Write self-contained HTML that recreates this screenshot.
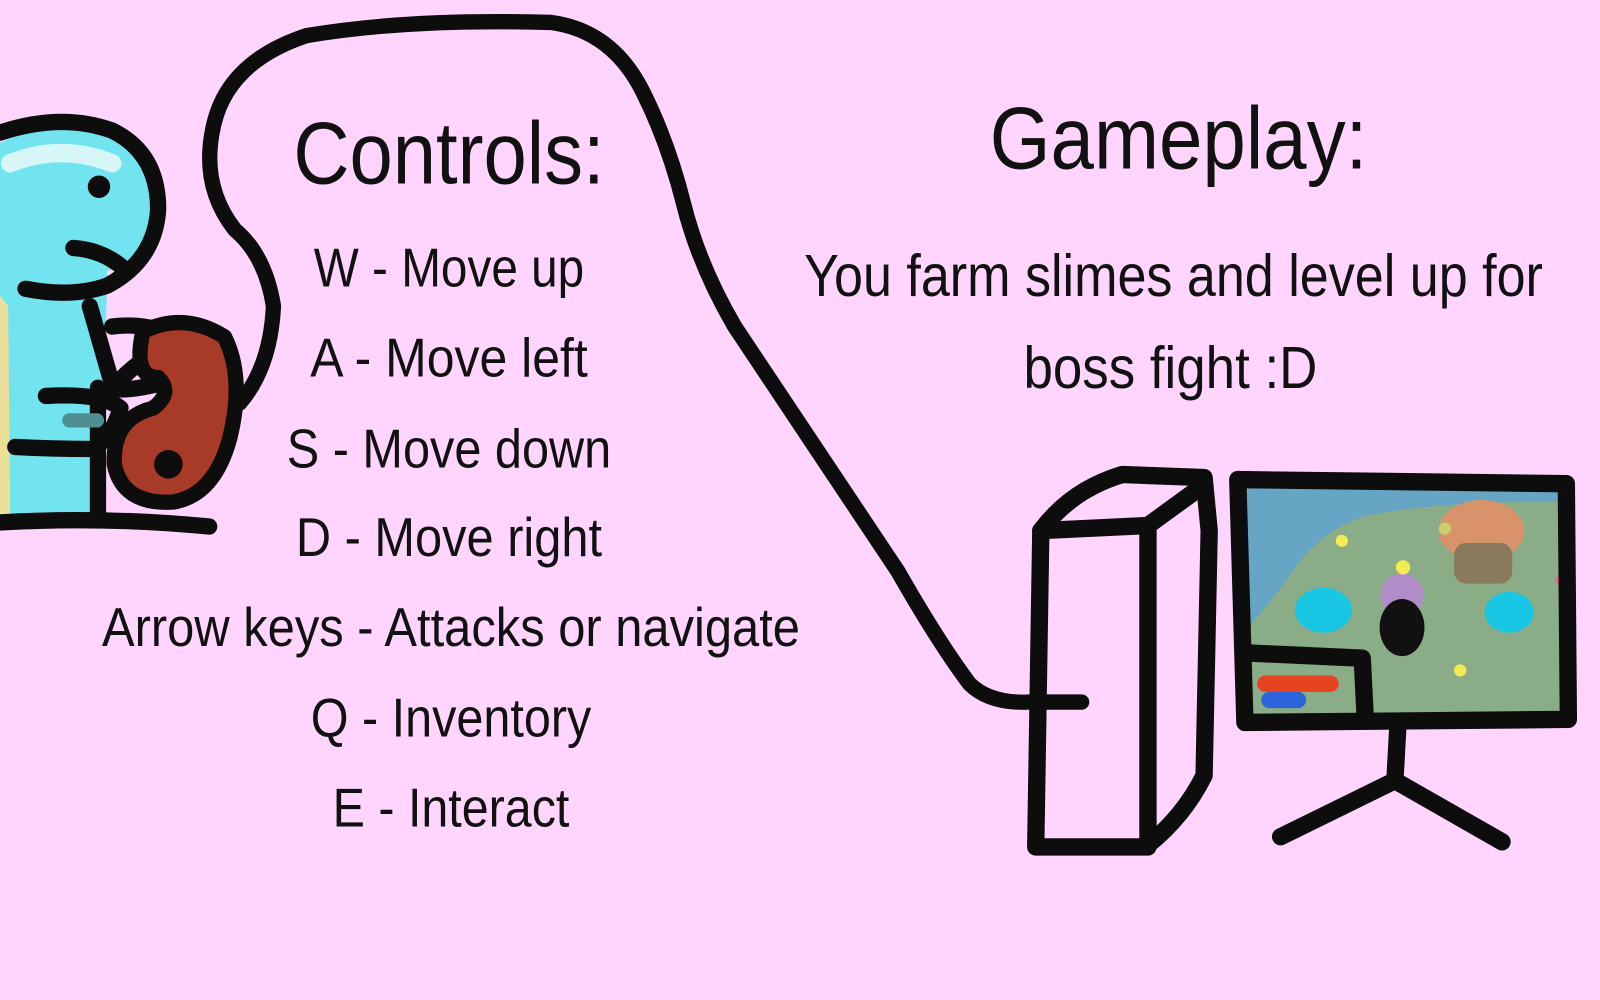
<!DOCTYPE html>
<html><head><meta charset="utf-8"><style>
html,body{margin:0;padding:0;width:1600px;height:1000px;overflow:hidden;background:#ffd5fe}
svg{display:block}
text{font-family:"Liberation Sans",sans-serif;fill:#111}
</style></head><body>
<svg width="1600" height="1000" viewBox="0 0 1568 980" preserveAspectRatio="none">
<rect width="1568" height="980" fill="#ffd5fe"/>
<!-- person -->
<rect x="0" y="240" width="12" height="270" fill="#ecdf9a"/>
<path d="M0 140 Q50 115 100 125 Q155 140 158 200 Q160 245 125 262 L105 265 L100 510 L10 510 L8 300 L0 290Z" fill="#72e4ef"/>
<path d="M10 160 Q60 140 110 160" stroke="#d6f6f8" stroke-width="18" fill="none" stroke-linecap="round"/>
<g stroke="#0d0d0d" stroke-width="16" fill="none" stroke-linecap="round" stroke-linejoin="round">
<path d="M0 130 Q60 110 110 128 Q155 150 155 205 Q152 255 105 280 Q70 292 25 283"/>
<path d="M72 243 Q100 245 120 262"/>
<path d="M88 300 L108 370 M96 380 L96 510 M0 512 Q100 506 205 516"/>
<path d="M110 320 Q150 315 180 335"/>
<path d="M45 388 Q100 385 118 400 Q110 430 90 440 Q50 440 15 438"/>
<path d="M120 370 Q150 340 175 345 Q185 360 160 375 Q120 385 110 380"/>
</g>
<circle cx="97" cy="183" r="11" fill="#0d0d0d"/>
<path d="M68 412 L95 412" stroke="#4f8f8f" stroke-width="14" stroke-linecap="round"/>
<!-- controller -->
<path d="M140 325 Q180 305 220 330 Q240 370 225 430 Q210 485 170 492 Q120 495 112 455 Q110 410 150 400 Q170 385 155 370 Q130 370 140 325Z" fill="#a83b27" stroke="#0d0d0d" stroke-width="15" stroke-linejoin="round"/>
<circle cx="165" cy="455" r="14" fill="#0d0d0d"/>
<!-- cable -->
<path d="M235 395 Q265 360 268 300 Q260 250 230 225 Q195 180 210 120 Q225 60 300 35 Q400 18 540 22 Q600 30 630 90 Q655 140 670 200 Q685 260 720 320 Q760 380 800 440 Q840 500 880 560 Q920 630 950 670 Q970 690 1010 688 L1060 688" stroke="#0d0d0d" stroke-width="15" fill="none" stroke-linecap="round" stroke-linejoin="round"/>
<!-- tower -->
<g stroke="#0d0d0d" stroke-width="17" fill="none" stroke-linecap="round" stroke-linejoin="round">
<path d="M1020 520 L1015 830 L1125 830 L1125 515 Z"/>
<path d="M1020 520 Q1050 480 1100 465 L1180 468 L1185 520 L1180 760 Q1160 800 1125 828"/>
<path d="M1125 515 L1180 475"/>
</g>
<!-- monitor -->
<path d="M1215 472 L1535 476 L1537 705 L1220 708Z" fill="#8aac87"/>
<path d="M1215 472 L1535 476 L1530 492 Q1420 490 1340 505 Q1290 520 1260 570 L1220 620Z" fill="#66a5c4"/>
<ellipse cx="1452" cy="520" rx="42" ry="30" fill="#d8936a"/>
<rect x="1425" y="532" width="57" height="40" rx="12" fill="#8a7a5b"/>
<ellipse cx="1297" cy="598" rx="28" ry="22" fill="#19c6e3"/>
<ellipse cx="1479" cy="600" rx="24" ry="20" fill="#19c6e3"/>
<circle cx="1374" cy="583" r="21" fill="#b08cc8"/>
<ellipse cx="1374" cy="615" rx="22" ry="28" fill="#111"/>
<circle cx="1431" cy="657" r="6" fill="#f4ea53"/><circle cx="1375" cy="556" r="7" fill="#f4ea53"/><circle cx="1315" cy="530" r="6" fill="#f4ea53"/><circle cx="1416" cy="518" r="6" fill="#c8cf6e"/><circle cx="1530" cy="568" r="6" fill="#e36f8c"/>
<rect x="1232" y="662" width="80" height="16" rx="8" fill="#e3441f"/>
<rect x="1236" y="678" width="44" height="16" rx="8" fill="#2b64db"/>
<g stroke="#0d0d0d" stroke-width="17" fill="none" stroke-linecap="round" stroke-linejoin="round">
<path d="M1213 470 L1535 474 L1537 705 L1220 708 Z"/>
<path d="M1225 640 L1335 645 L1338 705"/>
<path d="M1370 710 L1367 765 L1255 820 M1367 765 L1472 825"/>
</g>
<!-- text -->
<text x="440" y="180" font-size="86" text-anchor="middle" textLength="305" lengthAdjust="spacingAndGlyphs">Controls:</text>
<text x="440" y="281" font-size="54" text-anchor="middle" textLength="265" lengthAdjust="spacingAndGlyphs">W - Move up</text>
<text x="440" y="369" font-size="54" text-anchor="middle" textLength="272" lengthAdjust="spacingAndGlyphs">A - Move left</text>
<text x="440" y="458" font-size="54" text-anchor="middle" textLength="318" lengthAdjust="spacingAndGlyphs">S - Move down</text>
<text x="440" y="545" font-size="54" text-anchor="middle" textLength="300" lengthAdjust="spacingAndGlyphs">D - Move right</text>
<text x="442" y="633" font-size="54" text-anchor="middle" textLength="684" lengthAdjust="spacingAndGlyphs">Arrow keys - Attacks or navigate</text>
<text x="442" y="722" font-size="54" text-anchor="middle" textLength="275" lengthAdjust="spacingAndGlyphs">Q - Inventory</text>
<text x="442" y="810" font-size="54" text-anchor="middle" textLength="232" lengthAdjust="spacingAndGlyphs">E - Interact</text>
<text x="1155" y="165" font-size="86" text-anchor="middle" textLength="370" lengthAdjust="spacingAndGlyphs">Gameplay:</text>
<text x="1150" y="290" font-size="58" text-anchor="middle" textLength="724" lengthAdjust="spacingAndGlyphs">You farm slimes and level up for</text>
<text x="1147" y="380" font-size="58" text-anchor="middle" textLength="288" lengthAdjust="spacingAndGlyphs">boss fight :D</text>
</svg>
</body></html>
